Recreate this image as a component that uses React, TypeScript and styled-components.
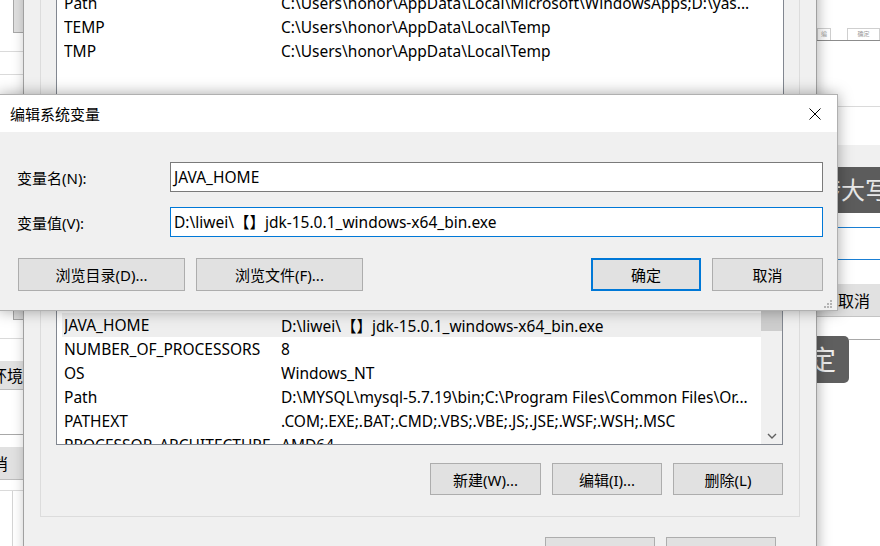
import React from "react";
import styled, { createGlobalStyle } from "styled-components";

const FONT = `"Noto Sans", "Noto Sans CJK SC", sans-serif`;

const GlobalStyle = createGlobalStyle`
  html, body {
    margin: 0;
    padding: 0;
    background: #fff;
    overflow: hidden;
  }
  body {
    font-family: ${FONT};
    font-size: 15px;
    color: #000;
  }
`;

type Var = { name: string; value: string; selected?: boolean };

const userVars: Var[] = [
  { name: "OneDrive", value: "C:\\Users\\honor\\OneDrive" },
  { name: "Path", value: "C:\\Users\\honor\\AppData\\Local\\Microsoft\\WindowsApps;D:\\yas..." },
  { name: "TEMP", value: "C:\\Users\\honor\\AppData\\Local\\Temp" },
  { name: "TMP", value: "C:\\Users\\honor\\AppData\\Local\\Temp" },
];

const systemVars: Var[] = [
  { name: "ComSpec", value: "C:\\WINDOWS\\system32\\cmd.exe" },
  { name: "DriverData", value: "C:\\Windows\\System32\\Drivers\\DriverData" },
  { name: "JAVA_HOME", value: "D:\\liwei\\【】jdk-15.0.1_windows-x64_bin.exe", selected: true },
  { name: "NUMBER_OF_PROCESSORS", value: "8" },
  { name: "OS", value: "Windows_NT" },
  { name: "Path", value: "D:\\MYSQL\\mysql-5.7.19\\bin;C:\\Program Files\\Common Files\\Or..." },
  { name: "PATHEXT", value: ".COM;.EXE;.BAT;.CMD;.VBS;.VBE;.JS;.JSE;.WSF;.WSH;.MSC" },
  { name: "PROCESSOR_ARCHITECTURE", value: "AMD64" },
];

export default function App() {
  return (
    <>
      <GlobalStyle />
      <Desktop>
        {/* window far behind, right side */}
        <BackWindow>
          <TabStrip>
            <TinyTab $w={12}>编</TinyTab>
            <TinyTab $w={0}>确定</TinyTab>
          </TabStrip>
          <ThinRule $top={65} $inset={21} />
          <LightBand />
          <DarkKey>转大写</DarkKey>
          <BlueField />
          <GreyButtonBand>取消</GreyButtonBand>
          <KeyRow>
            <SmallDarkKey>定</SmallDarkKey>
            <KeyRowLine />
          </KeyRow>
        </BackWindow>

        {/* window far behind, left side */}
        <LeftWindow>
          <EdgeThumb $top={0} $h={32} />
          <ThinRule $top={18} />
          <ThinRule $top={22} />
          <EdgeThumb $top={234} $h={10} />
          <ThinRule $top={18} />
          <EdgeButton $top={22} $h={28} $pr={-1}>
            环境
          </EdgeButton>
          <ThinRule $top={44} $dark />
          <EdgeButton $top={12} $h={32} $pr={15}>
            取消
          </EdgeButton>
          <ThinRule $top={10} />
          <EdgeColumn />
        </LeftWindow>

        {/* 环境变量 window */}
        <EnvWindow>
          <UserGroup>
            <VarList $height={200}>
              <RowsArea>
                {userVars.map((v) => (
                  <VarRow key={v.name}>
                    <span>{v.name}</span>
                    <span>{v.value}</span>
                  </VarRow>
                ))}
              </RowsArea>
            </VarList>
          </UserGroup>

          <SystemGroup>
            <VarList $height={181}>
              <RowsArea>
                {systemVars.map((v) => (
                  <VarRow key={v.name} $selected={v.selected}>
                    <span>{v.name}</span>
                    <span>{v.value}</span>
                  </VarRow>
                ))}
              </RowsArea>
              <ScrollBar>
                <ScrollArrow />
                <ScrollThumb />
                <ScrollSpacer />
                <ScrollArrow>
                  <svg width="10" height="6" viewBox="0 0 10 6">
                    <path d="M1 1 L5 5 L9 1" fill="none" stroke="#606060" strokeWidth="1.4" />
                  </svg>
                </ScrollArrow>
              </ScrollBar>
            </VarList>
            <ButtonRow $pr={0}>
              <WinButton $w={111}>新建(W)...</WinButton>
              <WinButton $w={110}>编辑(I)...</WinButton>
              <WinButton $w={110}>删除(L)</WinButton>
            </ButtonRow>
          </SystemGroup>

          <ButtonRow $pr={24} $mt={20}>
            <WinButton $w={110} />
            <WinButton $w={110} />
          </ButtonRow>
        </EnvWindow>

        {/* 编辑系统变量 dialog */}
        <Dialog>
          <TitleBar>
            <Title>编辑系统变量</Title>
            <CloseButton>
              <svg width="12" height="12" viewBox="0 0 12 12">
                <path d="M0.5 0.5 L11.5 11.5 M11.5 0.5 L0.5 11.5" stroke="#000" strokeWidth="1" />
              </svg>
            </CloseButton>
          </TitleBar>
          <DialogBody>
            <FieldRow>
              <FieldLabel>变量名(N):</FieldLabel>
              <TextBox>JAVA_HOME</TextBox>
            </FieldRow>
            <FieldRow>
              <FieldLabel>变量值(V):</FieldLabel>
              <TextBox $focused>D:\liwei\【】jdk-15.0.1_windows-x64_bin.exe</TextBox>
            </FieldRow>
            <DialogButtons>
              <WinButton $w={167} $h={33}>
                浏览目录(D)...
              </WinButton>
              <WinButton $w={167} $h={33}>
                浏览文件(F)...
              </WinButton>
              <Push />
              <WinButton $w={110} $h={33} $default>
                确定
              </WinButton>
              <WinButton $w={111} $h={33}>
                取消
              </WinButton>
            </DialogButtons>
          </DialogBody>
          <Grip>
            <svg width="8" height="8" viewBox="0 0 8 8" fill="#b4b4b4">
              <rect x="6" y="0" width="2" height="2" />
              <rect x="3" y="3" width="2" height="2" />
              <rect x="6" y="3" width="2" height="2" />
              <rect x="0" y="6" width="2" height="2" />
              <rect x="3" y="6" width="2" height="2" />
              <rect x="6" y="6" width="2" height="2" />
            </svg>
          </Grip>
        </Dialog>
      </Desktop>
    </>
  );
}

const Desktop = styled.div`
  position: relative;
  width: 880px;
  height: 546px;
  overflow: hidden;
  background: #fff;
`;

/* ---------- back window (right) ---------- */

const BackWindow = styled.div`
  position: absolute;
  left: 797px;
  top: 0;
  width: 83px;
  height: 546px;
  padding-left: 20px;
  box-sizing: border-box;
  background: #fff;
  display: flex;
  flex-direction: column;
`;

const TabStrip = styled.div`
  margin-top: 28px;
  height: 12px;
  display: flex;
  gap: 16px;
  border-bottom: 1px solid #8c8c8c;
`;

const TinyTab = styled.div<{ $w: number }>`
  ${(p) => (p.$w ? `width: ${p.$w}px;` : "flex: 1;")}
  border: 1px solid #cfcfcf;
  border-bottom: none;
  font-size: 6px;
  line-height: 11px;
  color: #9a9a9a;
  text-align: center;
  overflow: hidden;
`;

const ThinRule = styled.div<{ $top: number; $inset?: number; $dark?: boolean }>`
  margin-top: ${(p) => p.$top}px;
  margin-left: ${(p) => p.$inset ?? 0}px;
  height: 1px;
  flex-shrink: 0;
  background: ${(p) => (p.$dark ? "#a8a8a8" : "#dadada")};
`;

const LightBand = styled.div`
  margin-top: 38px;
  height: 22px;
  background: #f0f0f0;
`;

const DarkKey = styled.div`
  height: 46px;
  background: #5c5c5c;
  color: #e8e8e8;
  font-size: 24px;
  line-height: 46px;
  padding-left: 0;
  white-space: nowrap;
  overflow: hidden;
`;

const BlueField = styled.div`
  margin-top: 14px;
  height: 31px;
  border-top: 1px solid #1a7fd4;
  border-bottom: 1px solid #1a7fd4;
`;

const GreyButtonBand = styled.div`
  margin-top: 24px;
  height: 32px;
  background: #e1e1e1;
  border-bottom: 1px solid #c4c4c4;
  padding-left: 21px;
  font-size: 16px;
  line-height: 34px;
  white-space: nowrap;
  overflow: hidden;
`;

const KeyRow = styled.div`
  margin-top: 19px;
  display: flex;
  align-items: flex-start;
`;

const SmallDarkKey = styled.div`
  width: 52px;
  height: 47px;
  margin-left: -20px;
  box-sizing: border-box;
  padding-right: 13px;
  border-radius: 0 5px 5px 0;
  background: #5f5f5f;
  color: #ededed;
  font-size: 27px;
  line-height: 47px;
  text-align: right;
`;

const KeyRowLine = styled.div`
  flex: 1;
  margin-top: 3px;
  height: 1px;
  background: #a8a8a8;
`;

/* ---------- back window (left) ---------- */

const LeftWindow = styled.div`
  position: absolute;
  left: 0;
  top: 0;
  width: 23px;
  height: 546px;
  background: #fff;
  display: flex;
  flex-direction: column;
  overflow: hidden;
`;

const EdgeThumb = styled.div<{ $top: number; $h: number }>`
  margin-top: ${(p) => p.$top}px;
  margin-left: 13px;
  height: ${(p) => p.$h}px;
  flex-shrink: 0;
  background: #e0e0e0;
  border-left: 1px solid #a8a8a8;
  border-bottom: 1px solid #a8a8a8;
`;

const EdgeButton = styled.div<{ $top: number; $h: number; $pr: number }>`
  margin-top: ${(p) => p.$top}px;
  height: ${(p) => p.$h}px;
  flex-shrink: 0;
  background: #e1e1e1;
  border-bottom: 1px solid #bdbdbd;
  display: flex;
  justify-content: flex-end;
  align-items: center;
  padding-right: ${(p) => p.$pr}px;
  font-size: 16px;
  white-space: nowrap;
`;

const EdgeColumn = styled.div`
  flex: 1;
  width: 12px;
  border-right: 1px solid #d4d4d4;
`;

/* ---------- 环境变量 window ---------- */

const EnvWindow = styled.div`
  position: absolute;
  left: 23px;
  top: -60px;
  width: 794px;
  height: 640px;
  box-sizing: border-box;
  padding: 0 16px;
  background: #f0f0f0;
  border-left: 1px solid #a0a0a0;
  border-right: 1px solid #a0a0a0;
  box-shadow: 2px 0 12px rgba(0, 0, 0, 0.28);
  display: flex;
  flex-direction: column;
`;

const UserGroup = styled.div`
  height: 270px;
  box-sizing: border-box;
  padding: 26px 15px 0;
  border: 1px solid #dcdcdc;
  border-top: none;
`;

const SystemGroup = styled.div`
  margin-top: 15px;
  padding: 38px 16px 21px 15px;
  border: 1px solid #dcdcdc;
`;

const VarList = styled.div<{ $height: number }>`
  height: ${(p) => p.$height}px;
  box-sizing: border-box;
  border: 1px solid #828790;
  background: #fff;
  display: flex;
  overflow: hidden;
`;

const RowsArea = styled.div`
  flex: 1;
  min-width: 0;
  overflow: hidden;
`;

const VarRow = styled.div<{ $selected?: boolean }>`
  height: 24px;
  margin-left: 5px;
  padding-left: 2px;
  display: grid;
  grid-template-columns: 217px 1fr;
  align-items: center;
  white-space: nowrap;
  overflow: hidden;
  font-size: 15.5px;
  background: ${(p) => (p.$selected ? "#eeeeee" : "transparent")};

  span {
    overflow: hidden;
  }
`;

const ScrollBar = styled.div`
  width: 21px;
  background: #f0f0f0;
  display: flex;
  flex-direction: column;
`;

const ScrollArrow = styled.div`
  height: 17px;
  display: flex;
  align-items: center;
  justify-content: center;
`;

const ScrollThumb = styled.div`
  margin-top: 28px;
  height: 21px;
  background: #cdcdcd;
`;

const ScrollSpacer = styled.div`
  flex: 1;
`;

const ButtonRow = styled.div<{ $pr: number; $mt?: number }>`
  margin-top: ${(p) => p.$mt ?? 18}px;
  padding-right: ${(p) => p.$pr}px;
  display: flex;
  justify-content: flex-end;
  gap: 11px;
`;

const WinButton = styled.div<{ $w: number; $h?: number; $default?: boolean }>`
  width: ${(p) => p.$w}px;
  height: ${(p) => p.$h ?? 32}px;
  box-sizing: border-box;
  background: #e1e1e1;
  border: ${(p) => (p.$default ? "2px solid #0078d7" : "1px solid #adadad")};
  display: flex;
  align-items: center;
  justify-content: center;
  font-size: 15px;
  white-space: nowrap;
  flex-shrink: 0;
`;

/* ---------- 编辑系统变量 dialog ---------- */

const Dialog = styled.div`
  position: absolute;
  left: -1px;
  top: 94px;
  width: 839px;
  height: 217px;
  box-sizing: border-box;
  background: #f0f0f0;
  border: 1px solid #b0b0b0;
  box-shadow: 0 0 14px rgba(0, 0, 0, 0.35);
  display: flex;
  flex-direction: column;
`;

const TitleBar = styled.div`
  height: 37px;
  flex-shrink: 0;
  background: #fff;
  display: flex;
  align-items: center;
  justify-content: space-between;
  padding-left: 10px;
`;

const Title = styled.div`
  font-size: 15px;
`;

const CloseButton = styled.div`
  width: 44px;
  height: 37px;
  display: flex;
  align-items: center;
  justify-content: center;
`;

const DialogBody = styled.div`
  padding: 30px 14px 0 18px;
  display: flex;
  flex-direction: column;
  gap: 15px;
`;

const FieldRow = styled.div`
  display: grid;
  grid-template-columns: 152px 1fr;
  align-items: center;
`;

const FieldLabel = styled.div`
  font-size: 15px;
  margin-left: -1px;
`;

const TextBox = styled.div<{ $focused?: boolean }>`
  height: 30px;
  box-sizing: border-box;
  background: #fff;
  border: 1px solid ${(p) => (p.$focused ? "#0078d7" : "#7a7a7a")};
  padding-left: 3px;
  line-height: 28px;
  font-size: 15.5px;
  white-space: nowrap;
  overflow: hidden;
`;

const DialogButtons = styled.div`
  margin-top: 6px;
  display: flex;
  gap: 11px;
`;

const Push = styled.div`
  flex: 1;
`;

const Grip = styled.div`
  position: absolute;
  right: 5px;
  bottom: 2px;
  width: 8px;
  height: 8px;
  line-height: 0;
`;
